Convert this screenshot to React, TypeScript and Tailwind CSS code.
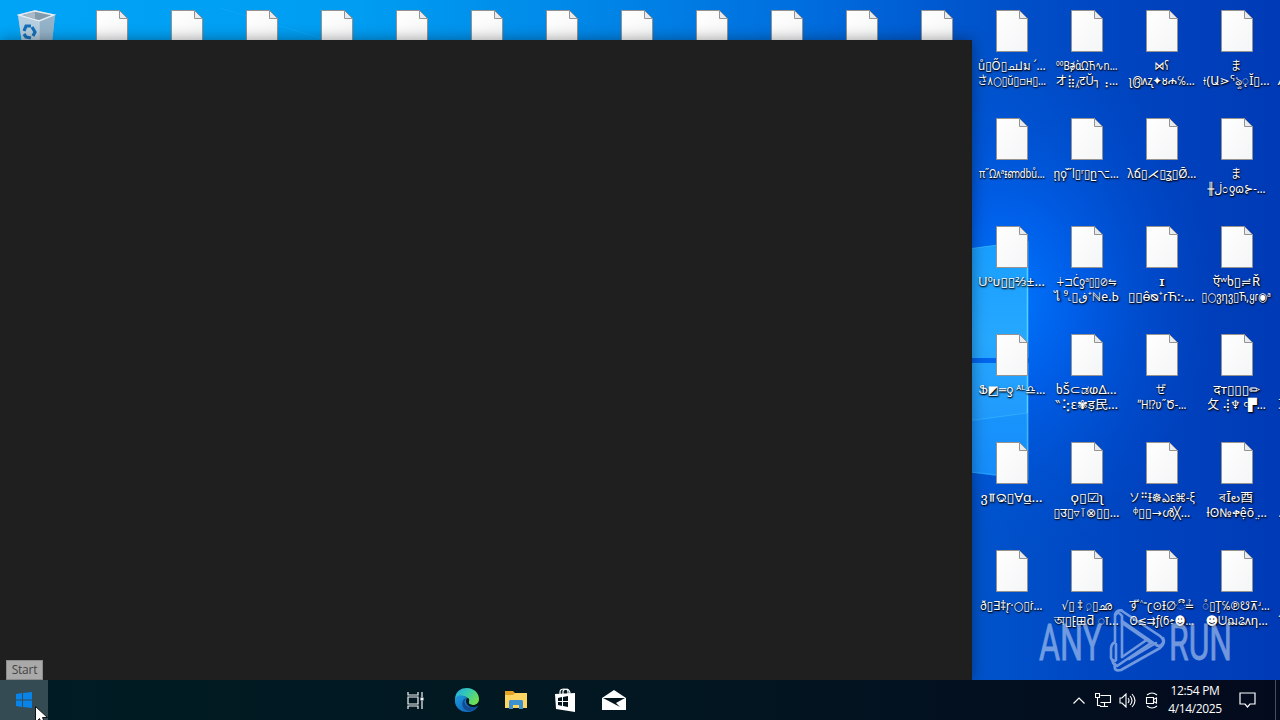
import React, { useLayoutEffect, useRef } from 'react';

type Line = [text: string, width: number];

const columns: Line[][][] = [
  [
    [['ů▯Ő▯ച⅃ม ՛…', 68], ['さ٨○▯ŭ▯▫︎ʜ▯…', 68]],
    [['π˝Ωᴧᵃᵻണdbů…', 66]],
    [['Uºᴜ▯▯⅔±…', 67]],
    [['Ֆ◩═ƍ ᴬᴸ♎︎…', 67]],
    [['ვ⫪ଭ▯Ɐα̲…', 62]],
    [['ð▯∃‡r̨·○▯ɾ̇…', 62]],
  ],
  [
    [['ººВǝ̸ὰΩЋ∿ո…', 61], ['オ⣷⁁टŬ┐⢠…', 63]],
    [['ῃϙ̌˝l▯ʳ▯ը⌥…', 65]],
    [['∔⊐Ċƍᵃ▯▯⊘⇋', 61], ['ไ ⁹˻▯ڧ⁺ℕe.Ь', 64]],
    [['ხŠ⊂ಡⱷΔ…', 61], ['‶⢕ε✾ड़民…', 63]],
    [['ϙ▯☑ʅ', 33], ['▯उ▯▿⊺⊗▯▯…', 66]],
    [['√▯ ‡ ़▯ഛ', 50], ['অ▯⁅⊞ƌ ा…', 65]],
  ],
  [
    [['⋈ʕ', 14], ['ʅ൫ᴧʐ✦ᴕሐ℅…', 66]],
    [['λճ▯⋌▯ʓ▯Ø̄…', 69]],
    [['ɪ', 6], ['▯▯ɵ̂ᴓ⁺ɾЋ:·…', 66]],
    [['ぜ', 10], ['ʺH⁉︎ʋ˝Ծ-…', 49]],
    [['ソ⠛Ɨ☸︎ఎε⌘-ξ', 66], ['ᵠ▯▯→ൾ╳…', 58]],
    [['ず˄⁼ʗ⊙Ɨ∅ී≟', 66], ['ʘ≤⇉ƒ(ϭ፥☻…', 64]],
  ],
  [
    [['ま', 10], ['⟊(Ա⋗ᕐৡ◌̨Ĭ▯…', 66]],
    [['ま', 10], ['╫ڶ೦ƍɷ⊱-…', 58]],
    [['ऍʷხ▯≓Ř', 47], ['▯○ვƞვ▯Ћ,ყɾ◉ᵃ', 69]],
    [['दт▯▯▯✏︎', 47], ['攵 ⢼♆ ꜥ▛…', 58]],
    [['ৰĪల酉', 34], ['ƚʘ№ቀệō ̤…', 60]],
    [['◌̊▯Ţ℅℗☋⊼ʴ…', 67], ['☻ᕫฌଌᴧƞ…', 62]],
  ],
  [
    [['', 1], ['/▯Ʒ▯Ωd…', 67]],
    [],
    [],
    [['', 1], ['耳▯Ʒ▯Ωd…', 68]],
    [['', 1], ['.▯Ʒ▯Ωd…', 67]],
    [['', 1], ['˝▯Ʒ▯Ωd…', 67]],
  ],
];

function Label({ line }: { line: Line }) {
  const ref = useRef<HTMLSpanElement>(null);
  useLayoutEffect(() => {
    const el = ref.current;
    if (!el) return;
    el.style.transform = `scaleX(${line[1] / Math.max(1, el.offsetWidth)})`;
  }, [line]);
  return (
    <div className="flex h-[15px] w-[75px] justify-center pr-[2px]">
      <span
        ref={ref}
        className="shrink-0 whitespace-nowrap text-[12px] leading-[15px] text-white [text-shadow:1px_1px_2px_#000,0_1px_1px_#000b]"
      >
        {line[0]}
      </span>
    </div>
  );
}

function FileIcon() {
  return (
    <svg width="33" height="43" viewBox="0 0 33 43" className="shrink-0">
      <defs>
        <linearGradient id="paper" x1="0" y1="0" x2="1" y2="1">
          <stop offset="0" stopColor="#ffffff" />
          <stop offset="1" stopColor="#f4f5f6" />
        </linearGradient>
      </defs>
      <path d="M.5.5h23l8 8v33H.5z" fill="url(#paper)" stroke="#96928f" />
      <path d="M23.5.5v8h8z" fill="#e6ebf2" stroke="#96928f" />
    </svg>
  );
}

function DesktopFile({ lines }: { lines: Line[] }) {
  return (
    <div className="flex h-[108px] w-[75px] shrink-0 flex-col items-center pt-[10px]">
      <FileIcon />
      <div className="flex flex-col pt-[5px]">
        {lines.map((l, i) => (
          <Label key={i} line={l} />
        ))}
      </div>
    </div>
  );
}

function RecycleBin() {
  return (
    <svg width="40" height="44" viewBox="0 0 40 44">
      <path d="M1 5 18 0l20 5-4 37-13 2L6 40z" fill="#9fb5c5" />
      <path d="M1 5 22 12l-1 32L6 40z" fill="#b5cfe0" />
      <path d="M22 12 38 5l-4 37-13 2z" fill="#94b3c8" />
      <path d="M2 5 18 1l19 4-15 6z" fill="#829bac" stroke="#e3edf3" strokeWidth="1.4" />
      <path d="m6 5 12-3v7z" fill="#a9bac6" />
      <path d="M22 12v30" stroke="#c8dae6" />
      <g fill="none" stroke="#1470ba" strokeWidth="3.2">
        <path d="m7 21 2-5 5 0" />
        <path d="m15 17 3 5-2 4" />
        <path d="m14 28-5-1-2-3" />
      </g>
    </svg>
  );
}

function Wallpaper() {
  return (
    <svg width="1280" height="680" viewBox="0 0 1280 680" className="absolute left-0 top-0">
      <defs>
        <linearGradient id="sky" x1="0" x2="1280" y1="0" y2="0" gradientUnits="userSpaceOnUse">
          <stop offset="0" stopColor="#00a4f6" />
          <stop offset=".28" stopColor="#009df2" />
          <stop offset=".45" stopColor="#0088e8" />
          <stop offset=".62" stopColor="#006fdf" />
          <stop offset=".76" stopColor="#0054cc" />
          <stop offset=".88" stopColor="#0044c0" />
          <stop offset="1" stopColor="#003ab6" />
        </linearGradient>
        <radialGradient id="glow" cx="1005" cy="300" r="210" gradientUnits="userSpaceOnUse" gradientTransform="translate(1005 300) scale(1 1.25) translate(-1005 -300)">
          <stop offset="0" stopColor="#0078ff" />
          <stop offset=".35" stopColor="#0062ef" stopOpacity=".8" />
          <stop offset="1" stopColor="#004ccc" stopOpacity="0" />
        </radialGradient>
        <linearGradient id="pane" x1="0" y1="250" x2="0" y2="475" gradientUnits="userSpaceOnUse">
          <stop offset="0" stopColor="#1a9fff" />
          <stop offset=".4" stopColor="#26a8ff" />
          <stop offset="1" stopColor="#1c90fb" />
        </linearGradient>
      </defs>
      <path fill="url(#sky)" d="M0 0h1280v680H0z" />
      <path fill="url(#glow)" d="M760 0h520v680H760z" />
      <path fill="url(#pane)" d="m960 250 68-9v117h-68zM960 363h68v117l-68-9z" />
      <path d="M1027.5 241v117m0 5v117" stroke="#52d0ff" strokeWidth="1.6" fill="none" />
      <path d="m960 250 68-9M960 422l68-9M960 471l40 4" stroke="#46c5ff" opacity=".6" fill="none" />
      <path d="m960 422 68-9v67l-68-9z" fill="#0c86f8" opacity=".35" />
      <path d="M220 8l100 30" stroke="#2db1fb" opacity=".3" />
    </svg>
  );
}

function Watermark() {
  return (
    <svg width="196" height="66" viewBox="0 0 196 66" className="absolute left-[1038px] top-[608px] opacity-60">
      <g fill="#bcd2f4" stroke="#bcd2f4" strokeWidth=".8" fontFamily="Roboto" fontSize="50" fontWeight="400">
        <text x="1" y="51.500" textLength="63" lengthAdjust="spacingAndGlyphs">ANY</text>
        <text x="131" y="51.500" textLength="63" lengthAdjust="spacingAndGlyphs">RUN</text>
      </g>
      <g fill="none" stroke="#bcd2f4" strokeWidth="2.600" strokeLinejoin="round" strokeLinecap="round">
        <path d="M84 49V8q-4-6-7 0v26q-4 2-4 7v9q2 5 5 2V36" />
        <path d="M84 2.500q-5-1-7 4M84 3l38 25q6 5 1 9-3 2-6-1L84 13" />
        <path d="M84 15l29 20-34 23q-6-3-4-6" />
        <path d="M84 49l26-18M77 56q-2 8 6 6l39-22q6-5 3-10M91 51l27-16" />
      </g>
    </svg>
  );
}

function EdgeIcon() {
  return (
    <svg width="26" height="26" viewBox="0 0 26 26">
      <defs>
        <linearGradient id="edgeTop" x1="0" y1="0" x2="1" y2=".6">
          <stop offset="0" stopColor="#20a8e8" />
          <stop offset=".5" stopColor="#36c9b1" />
          <stop offset="1" stopColor="#70df51" />
        </linearGradient>
        <linearGradient id="edgeBase" x1="0" y1="0" x2="1" y2="1">
          <stop offset="0" stopColor="#1d99dd" />
          <stop offset="1" stopColor="#0b5db5" />
        </linearGradient>
      </defs>
      <path d="M1 13C1 4 7 1 13 1c7 0 12 5 12 11 0 4-3 6-6 6-3 0-5-1-4-3 1-5-6-7-10-4-2 1-4 3-4 6z" fill="url(#edgeTop)" />
      <path d="M1 14c0-5 5-7 9-5 3 1 5 3 5 5-3 2-1 6 4 6 2 0 3 0 5-1-2 4-6 6-11 6C6 25 1 20 1 14z" fill="url(#edgeBase)" />
      <path d="M10 12c-4 5-1 12 6 12 4-1 6-3 8-5-6 3-12 1-13-3-1-2 1-4 2-5z" fill="#154b91" />
      <path d="M12 14c0-2 1-3 2-3 2 1 1 3 1 4-1 2 2 3 5 3 2 0 4-1 4-1l-1 2c-5 2-11 0-11-5z" fill="#051922" />
    </svg>
  );
}

export default function App() {
  return (
    <main className="relative flex h-[720px] w-[1280px] flex-col overflow-hidden bg-[#0044bd] font-['Noto_Sans','DejaVu_Sans','Noto_Sans_CJK_JP',sans-serif]">
      <section className="relative h-[680px] overflow-hidden">
        <Wallpaper />
        <div className="relative flex">
          <div className="flex h-[108px] w-[75px] shrink-0 justify-center pr-[1px] pt-[10px]"><RecycleBin /></div>
          {Array.from({ length: 12 }, (_, i) => <DesktopFile key={i} lines={[]} />)}
          {columns.map((col, i) => (
            <div key={i} className="flex shrink-0 flex-col">
              {col.map((lines, j) => <DesktopFile key={j} lines={lines} />)}
            </div>
          ))}
        </div>
        <Watermark />
        <div className="absolute bottom-0 left-0 top-[40px] w-[972px] bg-[#1f1f1f] shadow-[0_0_14px_#0006]" />
        <div className="absolute bottom-0 left-[6px] flex h-[20px] w-[37px] items-center justify-center border border-[#8a8a8a] bg-[#a9a9a9] font-['Open_Sans'] text-[12px] leading-none tracking-[-.2px] text-[#444]">Start</div>
      </section>

      <footer className="relative flex h-[40px] items-center bg-linear-to-r from-[#001c23] via-[#021721] to-[#030a1d]">
        <button className="flex h-[40px] w-[48px] items-center justify-center bg-[#354b54]">
          <svg width="16" height="16" viewBox="0 0 16 16" fill="#0883e8"><path d="m0 2 6-1v6.500H0zM7 1l9-1v7.500H7zM0 8.500h6V15l-6-1zM7 8.500h9V16l-9-1z" /></svg>
        </button>
        <div className="ml-[343px] flex h-[40px] items-center">
          <div className="flex w-[49px] justify-center pr-[1px]">
            <svg width="17" height="17" viewBox="0 0 17 17" fill="none" stroke="#f5f7f8" strokeWidth="1.2"><path d="M1 0v3h10V0M1 17v-3h10v3M1 5h10v7H1zM15 0v5m0 4v8" /><path d="M13.500 5.500h3v3h-3z" fill="white" stroke="none" /></svg>
          </div>
          <div className="flex w-[54px] justify-center"><EdgeIcon /></div>
          <div className="flex w-[44px] justify-center">
            <svg width="22" height="20" viewBox="0 0 22 20"><path d="M0 1h8l2 2h11v15H0z" fill="#e5a323" /><path d="M0 5h8l2-2h12v15H0z" fill="#ffd562" /><path d="M4 19v-8l1-1h12l1 1v8h-4v-4H8v4z" fill="#3d91d0" /></svg>
          </div>
          <div className="flex w-[54px] justify-center">
            <svg width="22" height="24" viewBox="0 0 22 24"><path d="M6 7V4q0-3 4-3t4 3v3M9 6V3q1-2 4-2 3 1 3 5" fill="none" stroke="white" strokeWidth="1.2" /><path d="m1 6 20-1v19L2 21z" fill="white" /><path d="m4 10 4-1v4H4zm5-1 5-1v5H9zm-5 5h4v4l-4-1zm5 0h5v5l-5-1z" fill="#03131c" /></svg>
          </div>
          <div className="flex w-[44px] justify-center">
            <svg width="24" height="20" viewBox="0 0 24 20"><path d="M0 8 12 0l12 8v12H0z" fill="white" /><path d="M1 8h22l-9 5 4 4z" fill="#03131c" /></svg>
          </div>
        </div>
        <div className="ml-auto flex h-[40px] items-center text-white">
          <div className="flex w-[24px] justify-center"><svg width="12" height="7" viewBox="0 0 12 7" fill="none" stroke="white" strokeWidth="1.2"><path d="m.5 6.500 5.500-5.500 5.500 5.500" /></svg></div>
          <div className="flex w-[24px] justify-center"><svg width="17" height="15" viewBox="0 0 17 15" fill="none" stroke="white" strokeWidth="1.1"><path d="M5.500 2.500h10v7h-10M5 13.500h8M9.500 9.500v4M.5.500h4v4h-4zM2.500 4.500v8h3" /></svg></div>
          <div className="flex w-[24px] justify-center"><svg width="17" height="15" viewBox="0 0 17 15" fill="none" stroke="white" strokeWidth="1.1"><path d="M1 5h2l4-4v13l-4-4H1zM9 5q2 2.500 0 5m2-7q4 4.500 0 9m2-11q6 6.500 0 13" /></svg></div>
          <div className="flex w-[25px] justify-center"><svg width="14" height="17" viewBox="0 0 14 17" fill="none" stroke="white" strokeWidth="1.1"><path d="M2 3q5-4 10 0M2 14q5 4 10 0M1.500 5.500h7v6h-7zM8.500 7.500l3-1.500v5l-3-1.500" /></svg></div>
          <div className="flex w-[62px] flex-col items-center font-['Open_Sans'] text-[12px] leading-[18px] tracking-[-.35px]"><span>12:54 PM</span><span>4/14/2025</span></div>
          <div className="flex w-[43px] justify-center"><svg width="17" height="16" viewBox="0 0 17 16" fill="none" stroke="white" strokeWidth="1.2"><path d="M1 1h15v11h-5l-2.500 3L6 12H1z" /></svg></div>
          <div className="ml-[6px] h-[40px] w-[5px] border-l border-[#49505b]" />
        </div>
        <svg width="13" height="20" viewBox="0 0 13 20" className="absolute left-[35px] top-[26px]"><path d="M.5.500v16l4-4 3 7 3-1-3-7h5z" fill="white" stroke="#111" /></svg>
      </footer>
    </main>
  );
}
